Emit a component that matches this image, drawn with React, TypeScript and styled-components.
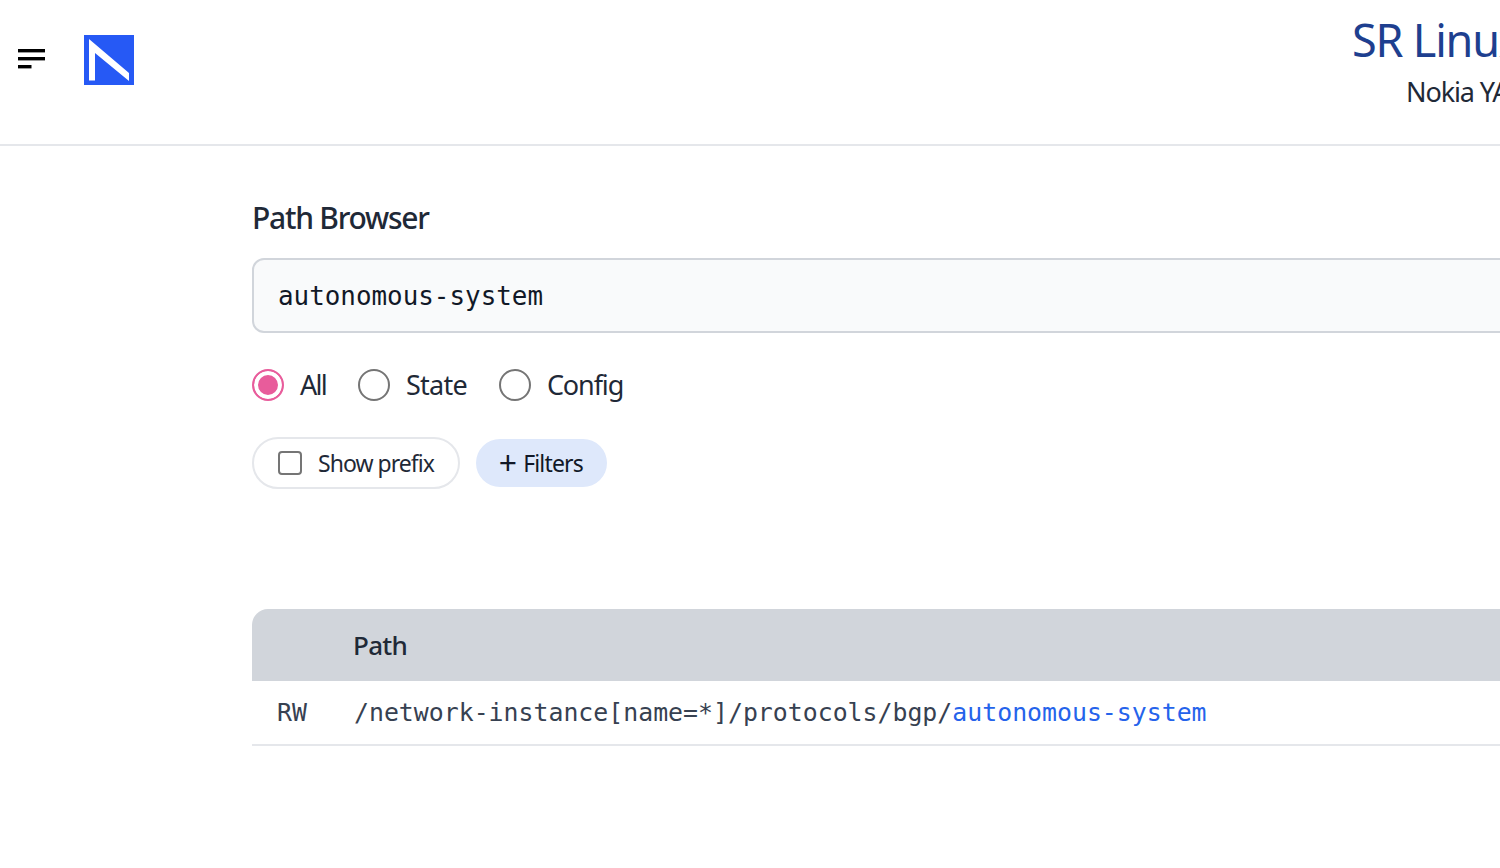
import React from "react";
import styled, { createGlobalStyle } from "styled-components";

const Global = createGlobalStyle`
  html, body { margin: 0; padding: 0; background: #fff; overflow: hidden; height: 868px; }
  body { font-family: "Noto Sans", "Open Sans", sans-serif; color: #1f2937; }
`;

const Page = styled.div`
  width: 1900px;
`;

const Header = styled.header`
  height: 144px;
  border-bottom: 2px solid #e5e7eb;
  display: flex;
  align-items: flex-start;
  box-sizing: content-box;
`;

const MenuButton = styled.div`
  width: 28px;
  height: 20px;
  margin: 49px 0 0 18px;
`;

const Logo = styled.div`
  width: 50px;
  height: 50px;
  margin: 35px 0 0 38px;
`;

const TitleBlock = styled.div`
  margin-left: 1218px;
  padding-top: 10px;
  display: flex;
  flex-direction: column;
`;

const Title = styled.div`
  font-size: 45px;
  line-height: 60px;
  letter-spacing: -1.2px;
  color: #1e3f8f;
  white-space: nowrap;
`;

const Subtitle = styled.div`
  font-size: 27px;
  line-height: 40px;
  letter-spacing: -1.1px;
  margin: 2px 0 0 54px;
  color: #1f2937;
  white-space: nowrap;
`;

const Main = styled.main`
  padding: 50px 0 0 252px;
  width: 1500px;
`;

const Heading = styled.h2`
  margin: 0;
  font-size: 30px;
  line-height: 44px;
  font-weight: 500;
  letter-spacing: -1.25px;
  color: #1f2937;
`;

const PathInput = styled.div`
  margin-top: 18px;
  height: 75px;
  box-sizing: border-box;
  border: 2px solid #d1d5db;
  border-radius: 12px;
  background: #f9fafb;
  padding-left: 24px;
  display: flex;
  align-items: center;
  font-family: "DejaVu Sans Mono", monospace;
  font-size: 25.9px;
  color: #111827;
`;

const RadioRow = styled.div`
  display: flex;
  align-items: center;
  gap: 32px;
  margin-top: 36px;
  height: 32px;
`;

const RadioItem = styled.label<{ $spacing: number }>`
  display: flex;
  align-items: center;
  gap: 16px;
  font-size: 27px;
  line-height: 30px;
  letter-spacing: ${(p) => p.$spacing}px;
  color: #1f2937;
`;

const RadioMark = styled.span<{ $checked?: boolean }>`
  width: 32px;
  height: 32px;
  box-sizing: border-box;
  border-radius: 50%;
  border: 2px solid ${(p) => (p.$checked ? "#e85c9b" : "#757575")};
  background: ${(p) => (p.$checked ? "#e85c9b" : "#fff")};
  box-shadow: ${(p) => (p.$checked ? "inset 0 0 0 4px #fff" : "none")};
`;

const ChipRow = styled.div`
  display: flex;
  align-items: center;
  gap: 16px;
  margin-top: 36px;
`;

const PrefixChip = styled.label`
  height: 52px;
  box-sizing: border-box;
  border: 2px solid #e5e7eb;
  border-radius: 26px;
  display: flex;
  align-items: center;
  gap: 16px;
  padding: 0 24px;
  font-size: 23px;
  letter-spacing: -0.97px;
  color: #1f2937;
`;

const CheckBox = styled.span`
  width: 24px;
  height: 24px;
  box-sizing: border-box;
  border: 2px solid #757575;
  border-radius: 4px;
`;

const FilterChip = styled.button`
  height: 48px;
  width: 131px;
  border: 0;
  border-radius: 24px;
  background: #dee8fb;
  padding: 0 0 0 23px;
  display: inline-flex;
  align-items: center;
  gap: 6px;
  font-family: inherit;
  font-size: 23px;
  letter-spacing: -0.85px;
  color: #111827;
`;

const PlusSign = styled.span`
  font-size: 32px;
  font-weight: 400;
  line-height: 1;
  letter-spacing: 0;
`;

const Table = styled.div`
  margin-top: 120px;
`;

const HeadRow = styled.div`
  height: 72px;
  background: #d1d5db;
  border-radius: 16px 0 0 0;
  display: flex;
  align-items: center;
  padding-left: 101px;
  font-size: 26px;
  font-weight: 500;
  letter-spacing: -0.7px;
  color: #1f2937;
`;

const BodyRow = styled.div`
  height: 63px;
  border-bottom: 2px solid #e5e7eb;
  display: flex;
  align-items: center;
  font-family: "DejaVu Sans Mono", monospace;
  font-size: 24.85px;
  color: #374151;
  white-space: nowrap;
`;

const Access = styled.span`
  width: 102px;
  padding-left: 25px;
  box-sizing: border-box;
`;

const Match = styled.span`
  color: #2563eb;
`;

export default function App() {
  return (
    <Page>
      <Global />
      <Header>
        <MenuButton>
          <svg width="28" height="20" viewBox="0 0 28 20">
            <rect y="0" width="27" height="3.4" fill="#000" />
            <rect y="8" width="27" height="3.4" fill="#000" />
            <rect y="16" width="13.5" height="3.4" fill="#000" />
          </svg>
        </MenuButton>
        <Logo>
          <svg width="50" height="50" viewBox="0 0 50 50">
            <rect width="50" height="50" fill="#2659f5" />
            <path d="M5 4 L45 38 V46 L11 18 V45.5 H5 Z" fill="#fff" />
          </svg>
        </Logo>
        <TitleBlock>
          <Title>SR Linux</Title>
          <Subtitle>Nokia YANG</Subtitle>
        </TitleBlock>
      </Header>
      <Main>
        <Heading>Path Browser</Heading>
        <PathInput>autonomous-system</PathInput>
        <RadioRow>
          <RadioItem $spacing={-1.75}><RadioMark $checked />All</RadioItem>
          <RadioItem $spacing={-0.75}><RadioMark />State</RadioItem>
          <RadioItem $spacing={-1.1}><RadioMark />Config</RadioItem>
        </RadioRow>
        <ChipRow>
          <PrefixChip><CheckBox />Show prefix</PrefixChip>
          <FilterChip><PlusSign>+</PlusSign>Filters</FilterChip>
        </ChipRow>
        <Table>
          <HeadRow>Path</HeadRow>
          <BodyRow>
            <Access>RW</Access>
            /network-instance[name=*]/protocols/bgp/<Match>autonomous-system</Match>
          </BodyRow>
        </Table>
      </Main>
    </Page>
  );
}
